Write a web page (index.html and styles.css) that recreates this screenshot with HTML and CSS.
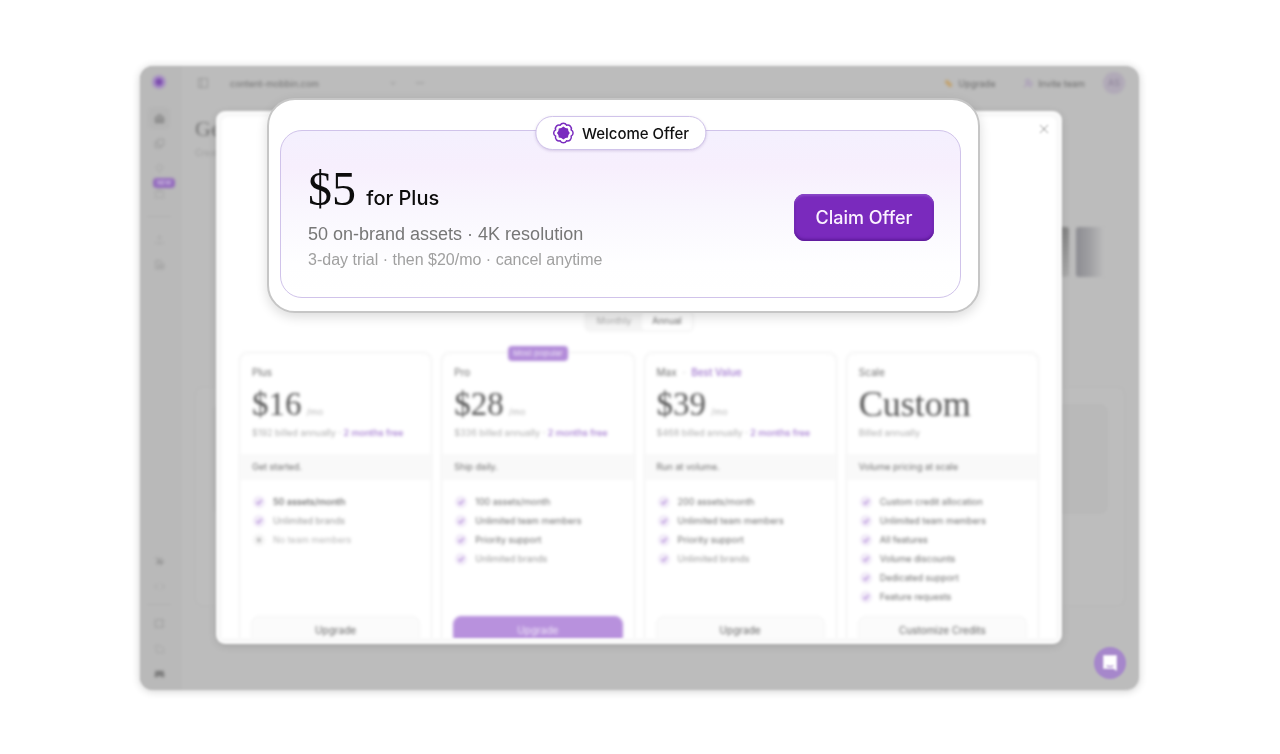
FILE: index.html
```html
<!DOCTYPE html>
<html lang="en">
<head>
    <meta charset="UTF-8">
    <meta name="viewport" content="width=device-width, initial-scale=1.0">
    <title>Welcome Offer</title>
    <link rel="stylesheet" href="styles.css">
</head>
<body>

    <svg class="defs" aria-hidden="true">
        <symbol id="rosette" viewBox="-12 -12 24 24">
            <path class="outline" d="M8.5 -3.5A4 4 0 0 1 8.5 3.5A4 4 0 0 1 3.5 8.5A4 4 0 0 1 -3.5 8.5A4 4 0 0 1 -8.5 3.5A4 4 0 0 1 -8.5 -3.5A4 4 0 0 1 -3.5 -8.5A4 4 0 0 1 3.5 -8.5A4 4 0 0 1 8.5 -3.5Z"/>
            <path class="solid" d="M7 0L5.5 2.3L5 5L2.3 5.5L0 7L-2.3 5.5L-5 5L-5.5 2.3L-7 0L-5.5 -2.3L-5 -5L-2.3 -5.5L0 -7L2.3 -5.5L5 -5L5.5 -2.3Z"/>
        </symbol>
        <symbol id="check" viewBox="0 0 12 12">
            <circle class="dot" cx="6" cy="6" r="6"/>
            <path class="tick" d="M3.5 6.2L5.3 8L8.8 4"/>
        </symbol>
        <symbol id="cross" viewBox="0 0 12 12">
            <circle class="dot-off" cx="6" cy="6" r="6"/>
            <path class="tick-off" d="M4.3 4.3L7.7 7.7M7.7 4.3L4.3 7.7"/>
        </symbol>
    </svg>

    <div class="stage">
        <div class="app">
            <nav class="sidebar" aria-label="Main">
                <a class="logo" href="#" aria-label="Start"><svg viewBox="0 0 14 14"><circle cx="7" cy="7" r="6" fill="#a58bc4"/><circle cx="7" cy="7" r="3" fill="#7c4cae"/></svg></a>
                <a class="side-link active" href="#" aria-label="Home"><svg viewBox="0 0 12 12"><path d="M1.5 5L6 1.5L10.5 5V10.5H1.5Z" fill="#999"/><path d="M4 8H8"/></svg></a>
                <a class="side-link" href="#" aria-label="Assets"><svg viewBox="0 0 12 12"><path d="M4 1.5H10.5V8H4ZM4 4H1.5V10.5H8V8"/></svg></a>
                <a class="side-link faint" href="#" aria-label="Ideas"><svg viewBox="0 0 12 12"><path d="M4.5 8C2 5 3 2 6 2S10 5 7.5 8ZM5 10.5H7"/></svg></a>
                <a class="side-link faint" href="#" aria-label="Projects"><svg viewBox="0 0 12 12"><path d="M1.5 4H10.5V10.5H1.5ZM4 4V2H8V4"/></svg><span class="new-badge">NEW</span></a>
                <span class="side-line"></span>
                <a class="side-link faint" href="#" aria-label="Team"><svg viewBox="0 0 12 12"><path d="M6 2V7M4 4L6 2L8 4M1.5 10H10.5"/></svg></a>
                <a class="side-link" href="#" aria-label="Brand"><svg viewBox="0 0 12 12"><path d="M2 2H7L10.5 5.5V10.5H2ZM5 6H8V8.5H5Z"/></svg></a>
                <span class="side-space"></span>
                <a class="side-link dark" href="#" aria-label="Apps"><svg viewBox="0 0 12 12"><path d="M2 2L6 5L3 9M6 2L10 6L7 10M3 7H9"/></svg></a>
                <a class="side-link faint" href="#" aria-label="Code"><svg viewBox="0 0 12 12"><path d="M3.5 3L1 6L3.5 9M8.5 3L11 6L8.5 9"/></svg></a>
                <span class="side-line short"></span>
                <a class="side-link" href="#" aria-label="Feedback"><svg viewBox="0 0 12 12"><path d="M1.5 2H10.5L9 6L10.5 10H1.5Z"/></svg></a>
                <a class="side-link faint" href="#" aria-label="Docs"><svg viewBox="0 0 12 12"><path d="M2 3H7L10.5 6V10.5H3Z"/></svg></a>
                <a class="side-link dark" href="#" aria-label="Discord"><svg viewBox="0 0 12 12"><path d="M2 3.5H10L11 9.5H8L7.5 8H4.5L4 9.5H1Z" fill="#7c7c7c"/></svg></a>
            </nav>

            <div class="workspace">
                <header class="topbar">
                    <svg class="panel-icon" viewBox="0 0 12 12"><path d="M1.5 1.5H10.5V10.5H1.5ZM4.5 1.5V10.5"/></svg>
                    <span class="site">content-mobbin.com</span>
                    <svg class="panel-icon" viewBox="0 0 12 12"><path d="M4 5L6 7.5L8 5"/></svg>
                    <svg class="panel-icon" viewBox="0 0 12 12"><path d="M2 6H10"/></svg>
                    <span class="fill"></span>
                    <a class="top-link" href="#"><svg viewBox="0 0 12 12"><path d="M3 3L9 9" stroke="#c3a069" stroke-width="4"/></svg>Upgrade</a>
                    <a class="top-link invite" href="#"><svg viewBox="0 0 12 12"><path d="M2 10C2 6 8 6 8 10M5 5.5A2 2 0 1 1 5.1 5.5M9 4V8" stroke="#9d83b8"/></svg>Invite team</a>
                    <span class="avatar">AS</span>
                </header>
                <main class="page">
                    <h1>Get started</h1>
                    <p>Create on-brand assets</p>
                    <div class="thumbs"><span></span><span></span></div>
                    <div class="panel"><div class="panel-fill"></div></div>
                </main>
            </div>

            <section class="modal" aria-label="Plans">
                <button class="close" type="button" aria-label="Close"><svg viewBox="0 0 12 12"><path d="M2 2L10 10M10 2L2 10"/></svg></button>
                <div class="modal-body">
                    <div class="switch">
                        <button type="button">Monthly</button>
                        <button class="on" type="button">Annual</button>
                    </div>

                    <div class="plans">
                        <article class="plan">
                            <div class="plan-head">
                                <h2>Plus</h2>
                                <p class="price">$16<small>/mo</small></p>
                                <p class="billing">$192 billed annually · <b>2 months free</b></p>
                            </div>
                            <p class="tagline">Get started.</p>
                            <ul>
                                <li class="strong"><svg><use href="#check"/></svg>50 assets/month</li>
                                <li class="muted"><svg><use href="#check"/></svg>Unlimited brands</li>
                                <li class="off"><svg><use href="#cross"/></svg>No team members</li>
                            </ul>
                            <button class="plan-button" type="button">Upgrade</button>
                        </article>

                        <article class="plan">
                            <span class="popular">Most popular</span>
                            <div class="plan-head">
                                <h2>Pro</h2>
                                <p class="price">$28<small>/mo</small></p>
                                <p class="billing">$336 billed annually · <b>2 months free</b></p>
                            </div>
                            <p class="tagline">Ship daily.</p>
                            <ul>
                                <li><svg><use href="#check"/></svg>100 assets/month</li>
                                <li><svg><use href="#check"/></svg>Unlimited team members</li>
                                <li><svg><use href="#check"/></svg>Priority support</li>
                                <li class="muted"><svg><use href="#check"/></svg>Unlimited brands</li>
                            </ul>
                            <button class="plan-button primary" type="button">Upgrade</button>
                        </article>

                        <article class="plan">
                            <div class="plan-head">
                                <h2>Max <i>·</i> <b>Best Value</b></h2>
                                <p class="price">$39<small>/mo</small></p>
                                <p class="billing">$468 billed annually · <b>2 months free</b></p>
                            </div>
                            <p class="tagline">Run at volume.</p>
                            <ul>
                                <li><svg><use href="#check"/></svg>200 assets/month</li>
                                <li><svg><use href="#check"/></svg>Unlimited team members</li>
                                <li><svg><use href="#check"/></svg>Priority support</li>
                                <li class="muted"><svg><use href="#check"/></svg>Unlimited brands</li>
                            </ul>
                            <button class="plan-button" type="button">Upgrade</button>
                        </article>

                        <article class="plan">
                            <div class="plan-head">
                                <h2>Scale</h2>
                                <p class="price custom">Custom</p>
                                <p class="billing">Billed annually</p>
                            </div>
                            <p class="tagline">Volume pricing at scale</p>
                            <ul>
                                <li><svg><use href="#check"/></svg>Custom credit allocation</li>
                                <li><svg><use href="#check"/></svg>Unlimited team members</li>
                                <li><svg><use href="#check"/></svg>All features</li>
                                <li><svg><use href="#check"/></svg>Volume discounts</li>
                                <li><svg><use href="#check"/></svg>Dedicated support</li>
                                <li><svg><use href="#check"/></svg>Feature requests</li>
                            </ul>
                            <button class="plan-button" type="button">Customize Credits</button>
                        </article>
                    </div>
                </div>
            </section>

            <button class="chat" type="button" aria-label="Open chat"><svg viewBox="0 0 16 16"><path d="M2 1H14V15L11 13H2Z" fill="#fff"/><path d="M5 10.5Q8 12 11 10.5" fill="none" stroke="#a687cb"/></svg></button>
        </div>

        <section class="offer">
            <div class="offer-card">
                <div class="offer-pill"><svg><use href="#rosette"/></svg>Welcome Offer</div>
                <div class="offer-text">
                    <p class="offer-price"><span>$5</span> for Plus</p>
                    <p class="offer-main">50 on-brand assets · 4K resolution</p>
                    <p class="offer-note">3-day trial · then $20/mo · cancel anytime</p>
                </div>
                <button class="claim" type="button">Claim Offer</button>
            </div>
        </section>
    </div>

</body>
</html>
```

FILE: styles.css
```css
* {
    box-sizing: border-box;
}
body {
    margin: 0;
    font-family: Inter, "Liberation Sans", sans-serif;
    background-color: #fff;
}
h1, h2, p, ul {
    margin: 0;
    padding: 0;
    font-weight: 400;
}
button {
    font-family: inherit;
    border: none;
    padding: 0;
    cursor: pointer;
}
a {
    color: inherit;
    text-decoration: none;
}
.defs {
    position: absolute;
    width: 0;
    height: 0;
}
.stage {
    position: relative;
    display: flex;
    min-height: 100vh;
    padding: 66px 141px 64px 140px;
}

/* Dimmed app behind the offer */
.app {
    position: relative;
    flex: 1;
    display: flex;
    border-radius: 13px;
    background-color: #bcbcbc;
    box-shadow: 0 1px 8px rgba(0, 0, 0, 0.2);
    filter: blur(1px);
}
/* small content is softer than the big edges */
.logo, .side-link, .topbar, .page, .plans, .switch {
    filter: blur(1px);
}
.app svg {
    fill: none;
    stroke: #999;
}
.sidebar {
    display: flex;
    flex-direction: column;
    align-items: center;
    gap: 3px;
    width: 42px;
    padding: 8px 4px 6px 0;
    background-color: #b9b9b9;
    border-radius: 13px 0 0 13px;
}
.logo {
    height: 16px;
    margin-bottom: 14px;
}
.logo svg {
    width: 16px;
    height: 16px;
    stroke: none;
}
.side-link {
    position: relative;
    display: flex;
    align-items: center;
    justify-content: center;
    width: 22px;
    height: 22px;
    border-radius: 5px;
}
.side-link svg {
    width: 11px;
    height: 11px;
}
.side-link.active {
    background-color: #b5b5b5;
}
.side-link.active svg, .side-link.dark svg {
    stroke: #7c7c7c;
}
.side-link.faint svg {
    stroke: #a6a6a6;
}
.new-badge {
    position: absolute;
    top: -4px;
    left: 5px;
    padding: 0 4px;
    border-radius: 4px;
    background-color: #9269bd;
    color: #cbb8df;
    font-size: 6px;
    line-height: 10px;
    font-weight: 700;
}
.side-line {
    width: 24px;
    height: 1px;
    margin: 9px 0 8px;
    background-color: #b1b1b1;
}
.side-line.short {
    margin: 4px 0;
}
.side-space {
    flex: 1;
}
.workspace {
    flex: 1;
    display: flex;
    flex-direction: column;
}
.topbar {
    display: flex;
    align-items: center;
    height: 34px;
    padding: 0 14px 0 15px;
    font-size: 9px;
    color: #707070;
}
.panel-icon {
    width: 12px;
    height: 12px;
}
.site {
    width: 157px;
    margin-left: 21px;
}
.site + .panel-icon {
    margin-right: 15px;
}
.fill {
    flex: 1;
}
.top-link {
    display: flex;
    align-items: center;
    gap: 4px;
    color: #6a6a6a;
}
.top-link svg {
    width: 11px;
    height: 11px;
}
.invite {
    margin: 0 18px 0 28px;
}
.avatar {
    width: 22px;
    border-radius: 50%;
    background-color: #b1aab8;
    color: #8d8399;
    line-height: 22px;
    text-align: center;
}
.page {
    flex: 1;
    display: flex;
    flex-direction: column;
    padding: 17px 14px 84px 13px;
    color: #747474;
}
.page h1 {
    font-family: "Liberation Serif", serif;
    font-size: 22px;
    line-height: 24px;
}
.page p {
    margin-top: 6px;
    color: #a1a1a1;
    font-size: 9px;
    line-height: 12px;
}
.thumbs {
    display: flex;
    justify-content: flex-end;
    gap: 7px;
    margin: 68px 21px 0 0;
}
.thumbs span {
    width: 28px;
    height: 50px;
    border-radius: 3px;
    background: linear-gradient(to right, #8c8c91, #a0a0a3 50%, #bcbcbc);
}
.thumbs span:first-child {
    background: linear-gradient(#858585, #aaa);
}
.panel {
    flex: 1;
    margin-top: 110px;
    padding: 16px;
    border: 1px solid #b8b8b8;
    border-radius: 8px;
    background-color: #bdbdbd;
}
.panel-fill {
    height: 110px;
    border-radius: 8px;
    background-color: #b9b9b9;
}

/* Pricing modal */
.modal {
    position: absolute;
    top: 45px;
    right: 77px;
    bottom: 46px;
    left: 76px;
    padding: 6px;
    border-radius: 9px;
    background-color: #f9f9f9;
    box-shadow: 0 2px 8px rgba(0, 0, 0, 0.12);
}
.close {
    position: absolute;
    top: 12px;
    right: 12px;
    width: 12px;
    height: 12px;
    background: none;
}
.close svg {
    display: block;
}
.modal-body {
    height: 100%;
    overflow: hidden;
    padding: 193px 16px 0;
    border-radius: 6px 6px 0 0;
    background-color: #fff;
}
.switch {
    display: flex;
    width: 110px;
    margin: 0 auto;
    padding: 2px;
    border-radius: 6px;
    background-color: #f5f5f5;
}
.switch button {
    flex: 1;
    border-radius: 4px;
    background: none;
    color: #aaa;
    font-size: 9px;
    line-height: 18px;
}
.switch .on {
    flex: 0 0 50px;
    background-color: #fff;
    color: #666;
}
.plans {
    display: grid;
    grid-template-columns: repeat(4, 1fr);
    gap: 7px;
    margin-top: 19px;
}
.plan {
    position: relative;
    display: flex;
    flex-direction: column;
    min-height: 308px;
    border: 3px solid #f8f8f8;
    border-radius: 10px;
    color: #6c6c6c;
}
.popular {
    position: absolute;
    top: -8px;
    left: 50%;
    transform: translateX(-50%);
    padding: 0 5px;
    border-radius: 4px;
    background-color: #b28bd9;
    color: #eee4f8;
    font-size: 8px;
    line-height: 15px;
    white-space: nowrap;
}
.plan-head {
    padding: 11px 11px 14px;
}
.plan h2 {
    font-size: 10px;
    line-height: 14px;
}
.plan b {
    color: #a177cf;
    font-weight: 500;
}
.plan i {
    margin: 0 3px;
    color: #bbb;
}
.price {
    margin-top: 7px;
    font-family: "Liberation Serif", serif;
    font-size: 33px;
    line-height: 36px;
    color: #555;
}
.price.custom {
    font-size: 36px;
}
.price small {
    margin-left: 5px;
    font-family: Inter, "Liberation Sans", sans-serif;
    font-size: 9px;
    line-height: 9px;
    color: #b5b5b5;
}
.billing {
    margin-top: 4px;
    font-size: 9px;
    line-height: 14px;
    color: #adadad;
    white-space: nowrap;
}
.tagline {
    padding: 0 11px;
    background-color: #f9f9f9;
    font-size: 9px;
    line-height: 26px;
}
.plan ul {
    flex: 1;
    padding: 12px 12px 0;
    list-style: none;
}
.plan li {
    display: flex;
    align-items: center;
    gap: 8px;
    height: 19px;
    font-size: 9px;
    white-space: nowrap;
}
.plan li svg {
    width: 12px;
    height: 12px;
}
.plan li.strong {
    color: #606060;
    font-weight: 500;
}
.plan li.muted {
    color: #999;
}
.plan li.off {
    color: #b8b8b8;
}
.dot {
    fill: #f1eaf8;
    stroke: none;
}
.tick {
    stroke: #b48fda;
    stroke-width: 1.4;
}
.dot-off {
    fill: #f4f4f4;
    stroke: none;
}
.tick-off {
    stroke: #aaa;
    stroke-width: 1.4;
}
.plan-button {
    margin: 0 10px 12px;
    border: 1px solid #f3f3f3;
    border-radius: 8px;
    background-color: #fbfbfb;
    color: #606060;
    font-size: 10px;
    line-height: 26px;
}
.plan-button.primary {
    border-color: #b891dd;
    background-color: #b891dd;
    color: #f3ecfa;
}
.chat {
    position: absolute;
    right: 13px;
    bottom: 11px;
    display: flex;
    align-items: center;
    justify-content: center;
    width: 32px;
    height: 32px;
    border-radius: 50%;
    background-color: #a687cb;
}
.chat svg {
    width: 18px;
    height: 18px;
    stroke: none;
}

/* Offer card */
.offer {
    position: absolute;
    top: 98px;
    right: 300px;
    left: 267px;
    padding: 30px 17px 13px 11px;
    border: 2px solid #c6c6c6;
    border-radius: 28px;
    background-color: #fff;
    box-shadow: 0 4px 12px rgba(0, 0, 0, 0.14);
}
.offer-card {
    position: relative;
    display: flex;
    align-items: center;
    justify-content: space-between;
    padding: 30px 26px 24px 27px;
    border: 1px solid #d0c3ea;
    border-radius: 22px;
    background: linear-gradient(#f4f0fe, #f7effd 22%, #f9f6fe 45%, #fefeff 80%, #fff);
}
.offer-pill {
    position: absolute;
    top: -15px;
    left: 50%;
    transform: translateX(-50%);
    display: flex;
    align-items: center;
    gap: 8px;
    height: 34px;
    padding: 0 16px;
    border: 1px solid #d0c3ea;
    border-radius: 18px;
    background-color: #fff;
    box-shadow: 0 1px 3px rgba(90, 50, 140, 0.2);
    color: #111;
    font-size: 15px;
    font-weight: 500;
    white-space: nowrap;
}
.offer-pill svg {
    width: 22px;
    height: 22px;
}
.outline {
    fill: none;
    stroke: #7a2cbf;
    stroke-width: 1.6;
}
.solid {
    fill: #7a2cbf;
}
.offer-price {
    color: #0c0c0c;
    font-size: 20px;
    font-weight: 500;
    line-height: 24px;
}
.offer-price span {
    margin-right: 5px;
    font-family: "Liberation Serif", serif;
    font-size: 48px;
    font-weight: 400;
    line-height: 56px;
}
.offer-main {
    margin-top: 4px;
    color: #777;
    font-family: "Liberation Sans", sans-serif;
    font-size: 18px;
    line-height: 26px;
}
.offer-note {
    color: #a0a0a0;
    font-family: "Liberation Sans", sans-serif;
    font-size: 16px;
    line-height: 26px;
}
.claim {
    width: 140px;
    height: 47px;
    border-radius: 11px;
    background-color: #7a2abd;
    box-shadow: inset 0 2px 2px #8b48c9, inset 0 -2px 3px #5f1b9c, inset 0 0 2px #5f1b9c;
    color: #fbf2ff;
    font-size: 18px;
    font-weight: 500;
}
```
